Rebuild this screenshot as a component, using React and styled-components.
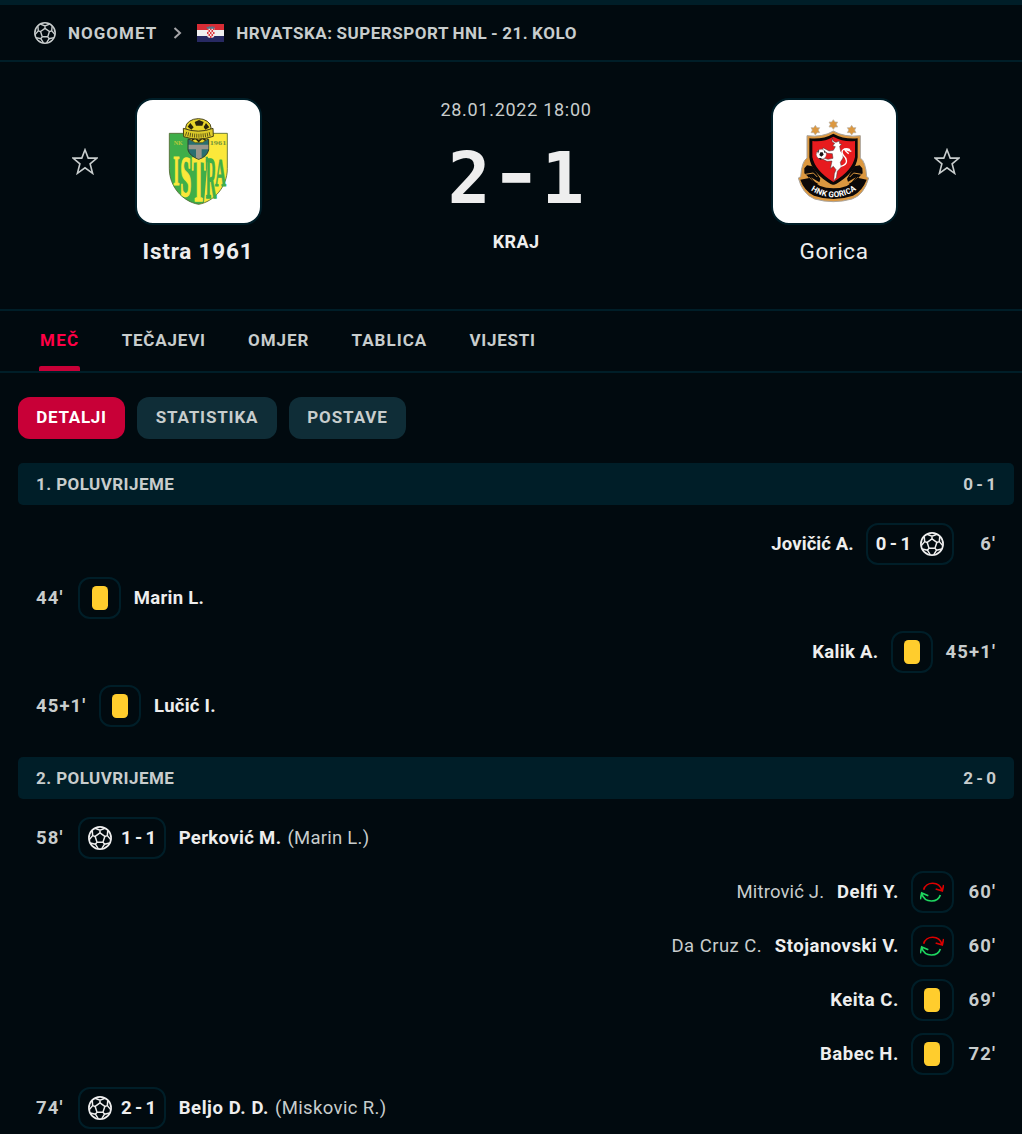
import React from 'react';
import styled, { createGlobalStyle } from 'styled-components';

const GlobalStyle = createGlobalStyle`
  * {
    box-sizing: border-box;
  }

  body {
    margin: 0;
    background: #010a0f;
    color: #eeeeee;
    font-family: Roboto, 'Liberation Sans', sans-serif;
    overflow: hidden;
  }
`;

const Page = styled.div`
  width: 1022px;
  height: 1134px;
  overflow: hidden;
  border-top: 5px solid #001e28;
`;

const Breadcrumb = styled.nav`
  display: flex;
  align-items: center;
  height: 57px;
  padding-left: 34px;
  border-bottom: 2px solid #001e28;
  color: #c8cdcd;
`;

const Crumb = styled.span`
  font-size: 17px;
  line-height: 24px;
  font-weight: 700;
  letter-spacing: ${props => props.$spacing}px;
  word-spacing: -0.9px;
  margin-left: 12px;
  white-space: nowrap;
`;

const Chevron = styled.svg`
  margin-left: 16px;
  margin-right: 15px;
`;

const MatchHeader = styled.header`
  display: grid;
  grid-template-columns: 26px 200px 1fr 200px 26px;
  justify-content: space-between;
  height: 249px;
  padding: 36px 62px 0 72px;
  border-bottom: 2px solid #001e28;
`;

const StarButton = styled.button`
  display: block;
  height: 27px;
  margin-top: 50px;
  padding: 0;
  border: 0;
  background: none;
`;

const Team = styled.div`
  display: flex;
  flex-direction: column;
  align-items: center;
`;

const Crest = styled.div`
  width: 127px;
  height: 127px;
  border: 2px solid #001e28;
  border-radius: 18px;
  background: #ffffff;
  overflow: hidden;

  svg {
    display: block;
  }
`;

const TeamName = styled.div`
  margin-top: 12px;
  font-size: 22.5px;
  line-height: 28px;
  font-weight: ${props => (props.$winner ? 700 : 400)};
  letter-spacing: ${props => props.$spacing}px;
  white-space: nowrap;
`;

const Result = styled.div`
  display: flex;
  flex-direction: column;
  align-items: center;
`;

const StartTime = styled.div`
  font-size: 18px;
  line-height: 24px;
  letter-spacing: 0.72px;
  color: #c8cdcd;
`;

const Score = styled.div`
  display: flex;
  gap: 4.2px;
  margin-top: 21px;
  font-family: 'DejaVu Sans Mono', monospace;
  font-size: 71px;
  line-height: 72px;
  font-weight: 700;
`;

const ScoreDash = styled.span`
  transform: translateY(-4px) scale(1.17, 0.8);
  -webkit-text-stroke: 2px #eeeeee;
`;

const Status = styled.div`
  margin-top: 15px;
  font-size: 18px;
  line-height: 24px;
  font-weight: 700;
  letter-spacing: 0.4px;
`;

const Tabs = styled.div`
  display: flex;
  gap: 40.2px;
  height: 62px;
  padding-left: 39px;
  border-bottom: 2px solid #001e28;
`;

const Tab = styled.div`
  display: flex;
  flex-direction: column;
  justify-content: space-between;
  padding: 17px 0 0;
  font-size: 17px;
  line-height: 24px;
  font-weight: 700;
  letter-spacing: ${props => props.$spacing}px;
  color: ${props => (props.$active ? '#ff0046' : '#c8cdcd')};

  span {
    padding: 0 1px;
  }

  &::after {
    content: '';
    height: 5px;
    border-radius: 2px 2px 0 0;
    background: ${props => (props.$active ? '#c80037' : 'transparent')};
  }
`;

const Pills = styled.div`
  display: flex;
  gap: 12px;
  padding: 24px 18px;
`;

const Pill = styled.div`
  height: 42px;
  width: ${props => props.$width}px;
  border-radius: 12px;
  text-align: center;
  font-size: 17px;
  line-height: 41px;
  font-weight: 700;
  letter-spacing: ${props => props.$spacing}px;
  color: ${props => (props.$active ? '#ffffff' : '#c8cdcd')};
  background: ${props => (props.$active ? '#c80037' : '#0f2d37')};
`;

const Half = styled.section`
  margin: 0 8px 24px 18px;
`;

const HalfTitle = styled.div`
  display: flex;
  justify-content: space-between;
  height: 42px;
  margin-bottom: 12px;
  padding: 0 18px;
  border-radius: 5px;
  background: #001e28;
  color: #c8cdcd;
  font-size: 17px;
  line-height: 42px;
  font-weight: 700;
  letter-spacing: 0.43px;
`;

const HalfScore = styled.span`
  letter-spacing: 0.1px;
  word-spacing: -1.2px;
`;

const Incident = styled.div`
  display: flex;
  flex-direction: ${props => (props.$away ? 'row-reverse' : 'row')};
  align-items: center;
  gap: 12.3px;
  height: 54px;
  padding: 0 18px;
  font-size: 18.5px;
  line-height: 24px;
`;

const Minute = styled.span`
  min-width: 30px;
  text-align: ${props => (props.$away ? 'right' : 'left')};
  font-weight: 700;
  letter-spacing: 1.1px;
  color: #c8cdcd;
`;

const IconBox = styled.div`
  display: flex;
  flex-direction: ${props => (props.$away ? 'row-reverse' : 'row')};
  align-items: center;
  justify-content: center;
  gap: 9px;
  width: ${props => (props.$wide ? 87.6 : 42.6)}px;
  height: 42px;
  border: 2px solid #001e28;
  border-radius: 12px;
  font-weight: 700;
  word-spacing: -1.2px;
`;

const YellowCard = styled.i`
  width: 16px;
  height: 24px;
  border-radius: 4.5px;
  background: #ffcd2d;
`;

const Player = styled.span`
  margin-left: 0.5px;
  font-weight: 700;
  letter-spacing: ${props => props.$spacing || 0}px;
`;

const Assist = styled.span`
  margin-left: ${props => (props.$away ? 0 : '-6.2px')};
  letter-spacing: ${props => props.$spacing || 0}px;
  color: #c8cdcd;
`;

const polar = (r, deg) => {
  const a = ((deg - 90) * Math.PI) / 180;
  return `${(12 + r * Math.cos(a)).toFixed(2)} ${(12 + r * Math.sin(a)).toFixed(2)}`;
};

const seams = [0, 72, 144, 216, 288]
  .map(
    a =>
      `M${polar(5.1, a)}L${polar(5.1, a + 72)}M${polar(5.1, a)}L${polar(7.7, a)}` +
      `M${polar(11, a - 27)}L${polar(7.7, a)}L${polar(11, a + 27)}`
  )
  .join('');

function Ball({ size = 24, color = '#eeeeee' }) {
  return (
    <svg width={size} height={size} viewBox="0 0 24 24" fill="none" stroke={color}>
      <circle cx="12" cy="12" r="11.1" strokeWidth="1.7" />
      <path d={seams} strokeWidth="1.5" />
    </svg>
  );
}

function Substitution() {
  return (
    <svg width="24" height="24" viewBox="780 44 72 72" fill="none" strokeWidth="5">
      <path d="M791 73C798 48 838 46 846 76M851 59L847 77L827 71" stroke="#dc0000" />
      <path d="M841 89C834 112 795 115 785 85M781 102L785 83L805 91" stroke="#1ed760" />
    </svg>
  );
}

function Star() {
  return (
    <svg width="26" height="27" viewBox="0 0 26 27" fill="none" stroke="#c8cdcd" strokeWidth="1.6">
      <path d="M13 1.8L16.2 10.1H25L18.1 15.8L20.6 25.3L13 19.8L5.4 25.3L7.9 15.8L1 10.1H9.8Z" />
    </svg>
  );
}

function Flag() {
  return (
    <svg width="27" height="18" viewBox="0 0 27 18">
      <path fill="#f0f0f0" d="M0 0h27v18H0z" />
      <path fill="#d82c35" d="M0 0h27v6H0z" />
      <path fill="#272962" d="M0 12h27v6H0z" />
      <path fill="#f5dede" d="M10 4h7.5v7q0 3-3.75 3T10 11z" />
      <path
        fill="#db3940"
        d="M10 4h1.5v2H10zM13 4h1.5v2H13zM16 4h1.5v2H16zM11.5 6H13v2h-1.5zM14.5 6H16v2h-1.5zM10 8h1.5v2H10zM13 8h1.5v2H13zM16 8h1.5v2H16zM11.5 10H13v2h-1.5zM14.5 10H16v2h-1.5zM13 12h1.5v2H13z"
      />
      <path fill="#55768b" d="M9.5 2.5l1.8.6 1-1 1.4.9 1.4-.9 1 1 1.8-.6-.6 2.2H10z" />
    </svg>
  );
}

const letter = {
  fontFamily: 'Liberation Serif, serif',
  fontWeight: 700,
  fontSize: 40,
  strokeWidth: 1,
};

function IstraCrest() {
  return (
    <svg width="123" height="123" viewBox="261 30 369 369">
      <path fill="#3fae49" d="M358 130H446V343C398 335 358 290 358 236Z" />
      <path fill="#fbe83a" d="M446 130H532V236C532 290 492 335 446 343Z" />
      <path fill="#3fae49" d="M423 200H474L462 338L446 343L426 334Z" />
      <path
        fill="none"
        stroke="#51662f"
        strokeWidth="2.5"
        d="M358 130H532V236C532 290 492 335 446 343C398 335 358 290 358 236Z"
      />
      <g {...letter}>
        <text fill="#fbe83a" stroke="#fbe83a" transform="translate(370 285) scale(1.2 3.1)">I</text>
        <text fill="#fbe83a" stroke="#fbe83a" transform="translate(391 317) scale(1.5 4.3)">S</text>
        <text fill="#fbe83a" stroke="#fbe83a" transform="translate(425 334) scale(1.55 4.9)">T</text>
        <text fill="#3fae49" stroke="#3fae49" transform="translate(467 323) scale(1.1 4.5)">R</text>
        <text fill="#3fae49" stroke="#3fae49" transform="translate(495 287) scale(1.15 3.05)">A</text>
      </g>
      <text x="371" y="165" fill="#b8c938" fontFamily="Liberation Serif" fontWeight="700" fontSize="18">NK</text>
      <text x="479" y="165" fill="#73943a" fontFamily="Liberation Serif" fontWeight="700" fontSize="19" textLength="50" lengthAdjust="spacingAndGlyphs">1961</text>
      <path fill="#286f70" stroke="#303c2d" strokeWidth="3" d="M414 148H476V180Q471 200 446 208Q419 198 414 180Z" />
      <path fill="#98958b" d="M416 164H475V178H455V203L446 207L438 203V178H416Z" />
      <ellipse cx="445" cy="113" rx="38" ry="27" fill="#e8d52b" stroke="#464114" strokeWidth="3" />
      <path fill="#28240c" d="M434 96L447 90L461 96L457 107H438ZM413 110L421 99L431 112L424 119ZM468 99L478 112L466 119L461 111Z" />
      <path fill="#e8d52b" d="M421 132H471V149L457 158H436L421 150Z" stroke="#464114" strokeWidth="2" />
      <path fill="none" stroke="#28240c" strokeWidth="5" d="M425 151L436 144L446 154L457 144L467 151" />
      <path fill="#ddcb2b" stroke="#464114" strokeWidth="3" d="M400 115Q445 132 489 115L490 139Q445 155 401 140Z" />
      <path fill="none" stroke="#4d4714" strokeWidth="12" strokeDasharray="2.5 4" d="M407 131Q445 143 484 131" />
    </svg>
  );
}

const starAt = (x, y) =>
  `M${x} ${y - 14}L${x + 5} ${y - 7}L${x + 13} ${y - 7}L${x + 9} ${y}L${x + 13} ${y + 8}` +
  `L${x + 5} ${y + 8}L${x} ${y + 15}L${x - 5} ${y + 8}L${x - 13} ${y + 8}L${x - 9} ${y}` +
  `L${x - 13} ${y - 7}L${x - 5} ${y - 7}Z`;

function GoricaCrest() {
  return (
    <svg width="123" height="123" viewBox="69 30 369 369">
      <path fill="#dc9840" stroke="#b9b2a8" strokeWidth="2" d={starAt(250, 103) + starAt(196, 120) + starAt(305, 120)} />
      <path
        fill="#dc9840"
        stroke="#aaa49c"
        strokeWidth="3"
        d="M171 137Q218 143 250 123Q284 143 331 137V204Q347 214 350 260L356 264Q342 315 306 327Q250 343 194 327Q157 312 145 264L152 260Q155 214 171 204Z"
      />
      <path fill="#0b0808" d="M178 145Q219 149 250 131Q283 149 323 145V202Q318 250 250 287Q183 250 178 202Z" />
      <path fill="#0b0808" d="M163 235L171 226L187 229L211 266L207 282L195 286L172 258L163 250ZM337 235L329 226L313 229L291 266L296 282L306 286L330 258L338 250Z" />
      <path fill="none" stroke="#dc9840" strokeWidth="3" d="M166 253L190 249L202 261M178 262L192 281M335 253L311 249L299 261M323 262L309 281" />
      <path fill="#e71b1e" d="M187 153Q222 157 250 140Q281 157 315 153V201Q307 242 250 276Q195 242 187 201Z" />
      <path fill="#dc9840" d="M182 262L207 276Q250 292 293 276L318 262Q298 292 250 295Q204 292 182 262Z" />
      <path fill="#0b0808" d="M151 269L178 264Q205 295 250 295Q297 295 322 263L350 269Q337 303 309 317Q250 337 192 317Q163 303 151 269Z" />
      <path
        fill="#ffffff"
        stroke="#433336"
        strokeWidth="1.5"
        d="M248 144Q246 154 258 157L268 153L269 161L275 162L269 169L272 184Q282 191 279 204L271 217L274 231L262 244L259 263L251 273L253 251L258 239L250 229L241 236L246 213L231 214L219 208L220 204L234 208L249 205L247 191L233 190L218 179L219 173L237 183L250 181L256 170L248 168L254 160Q242 157 248 144Z"
      />
      <path fill="none" stroke="#ffffff" strokeWidth="4" d="M272 229C299 222 289 204 280 196C269 179 285 172 300 179M282 177L304 184M284 180L296 191" />
      <circle cx="214" cy="193" r="15" fill="#ffffff" stroke="#555" />
      <path fill="#171112" d="M211 187L218 187L221 194L214 200L208 195ZM202 184L208 179L204 191ZM221 180L228 188L223 188ZM205 205L211 204L218 207L212 209Z" />
      <path id="ribbon" fill="none" d="M179 298Q250 346 323 297" />
      <text fill="#ffffff" fontFamily="Roboto" fontSize="24" fontWeight="700">
        <textPath href="#ribbon" startOffset="4" textLength="146">HNK GORICA</textPath>
      </text>
    </svg>
  );
}

const firstHalf = [
  { away: true, minute: "6'", type: 'goal', score: '0 - 1', player: 'Jovičić A.', spacing: 0.1 },
  { minute: "44'", type: 'card', player: 'Marin L.', spacing: 0.3 },
  { away: true, minute: "45+1'", type: 'card', player: 'Kalik A.', spacing: 0.3 },
  { minute: "45+1'", type: 'card', player: 'Lučić I.', spacing: 0.25 },
];

const secondHalf = [
  { minute: "58'", type: 'goal', score: '1 - 1', player: 'Perković M.', spacing: 0.35, other: '(Marin L.)', otherSpacing: 0.25 },
  { away: true, minute: "60'", type: 'sub', player: 'Delfi Y.', spacing: 0.5, other: 'Mitrović J.', otherSpacing: 0.15 },
  { away: true, minute: "60'", type: 'sub', player: 'Stojanovski V.', spacing: 0.5, other: 'Da Cruz C.', otherSpacing: 0.45 },
  { away: true, minute: "69'", type: 'card', player: 'Keita C.', spacing: 0.5 },
  { away: true, minute: "72'", type: 'card', player: 'Babec H.', spacing: 0.5 },
  { minute: "74'", type: 'goal', score: '2 - 1', player: 'Beljo D. D.', spacing: 0.58, other: '(Miskovic R.)', otherSpacing: 0.37 },
];

function IncidentRow({ item }) {
  return (
    <Incident $away={item.away}>
      <Minute $away={item.away}>{item.minute}</Minute>
      <IconBox $wide={item.type === 'goal'} $away={item.away}>
        {item.type === 'goal' && <Ball />}
        {item.type === 'goal' && <span>{item.score}</span>}
        {item.type === 'card' && <YellowCard />}
        {item.type === 'sub' && <Substitution />}
      </IconBox>
      <Player $spacing={item.spacing}>{item.player}</Player>
      {item.other && (
        <Assist $away={item.away} $spacing={item.otherSpacing}>
          {item.other}
        </Assist>
      )}
    </Incident>
  );
}

function HalfBlock({ title, score, items }) {
  return (
    <Half>
      <HalfTitle>
        <span>{title}</span>
        <HalfScore>{score}</HalfScore>
      </HalfTitle>
      {items.map((item, i) => (
        <IncidentRow key={i} item={item} />
      ))}
    </Half>
  );
}

function App() {
  return (
    <>
      <GlobalStyle />
      <Page>
        <Breadcrumb>
          <Ball size={22} color="#c8cdcd" />
          <Crumb $spacing={1}>NOGOMET</Crumb>
          <Chevron width="9" height="12" viewBox="0 0 9 12" fill="none" stroke="#a5a5a8" strokeWidth="2">
            <path d="M1.5 1L7 6L1.5 11" />
          </Chevron>
          <Flag />
          <Crumb $spacing={0.54}>HRVATSKA: SUPERSPORT HNL - 21. KOLO</Crumb>
        </Breadcrumb>

        <MatchHeader>
          <StarButton>
            <Star />
          </StarButton>
          <Team>
            <Crest>
              <IstraCrest />
            </Crest>
            <TeamName $winner $spacing={0.8}>Istra 1961</TeamName>
          </Team>
          <Result>
            <StartTime>28.01.2022 18:00</StartTime>
            <Score>
              <span>2</span>
              <ScoreDash>-</ScoreDash>
              <span>1</span>
            </Score>
            <Status>KRAJ</Status>
          </Result>
          <Team>
            <Crest>
              <GoricaCrest />
            </Crest>
            <TeamName $spacing={0.65}>Gorica</TeamName>
          </Team>
          <StarButton>
            <Star />
          </StarButton>
        </MatchHeader>

        <Tabs>
          <Tab $active $spacing={1.3}>
            <span>MEČ</span>
          </Tab>
          <Tab $spacing={0.8}>
            <span>TEČAJEVI</span>
          </Tab>
          <Tab $spacing={0.95}>
            <span>OMJER</span>
          </Tab>
          <Tab $spacing={1}>
            <span>TABLICA</span>
          </Tab>
          <Tab $spacing={0.75}>
            <span>VIJESTI</span>
          </Tab>
        </Tabs>

        <Pills>
          <Pill $active $width={107} $spacing={0.7}>DETALJI</Pill>
          <Pill $width={140} $spacing={0.85}>STATISTIKA</Pill>
          <Pill $width={117} $spacing={0.9}>POSTAVE</Pill>
        </Pills>

        <HalfBlock title="1. POLUVRIJEME" score="0 - 1" items={firstHalf} />
        <HalfBlock title="2. POLUVRIJEME" score="2 - 0" items={secondHalf} />
      </Page>
    </>
  );
}

export default App;
